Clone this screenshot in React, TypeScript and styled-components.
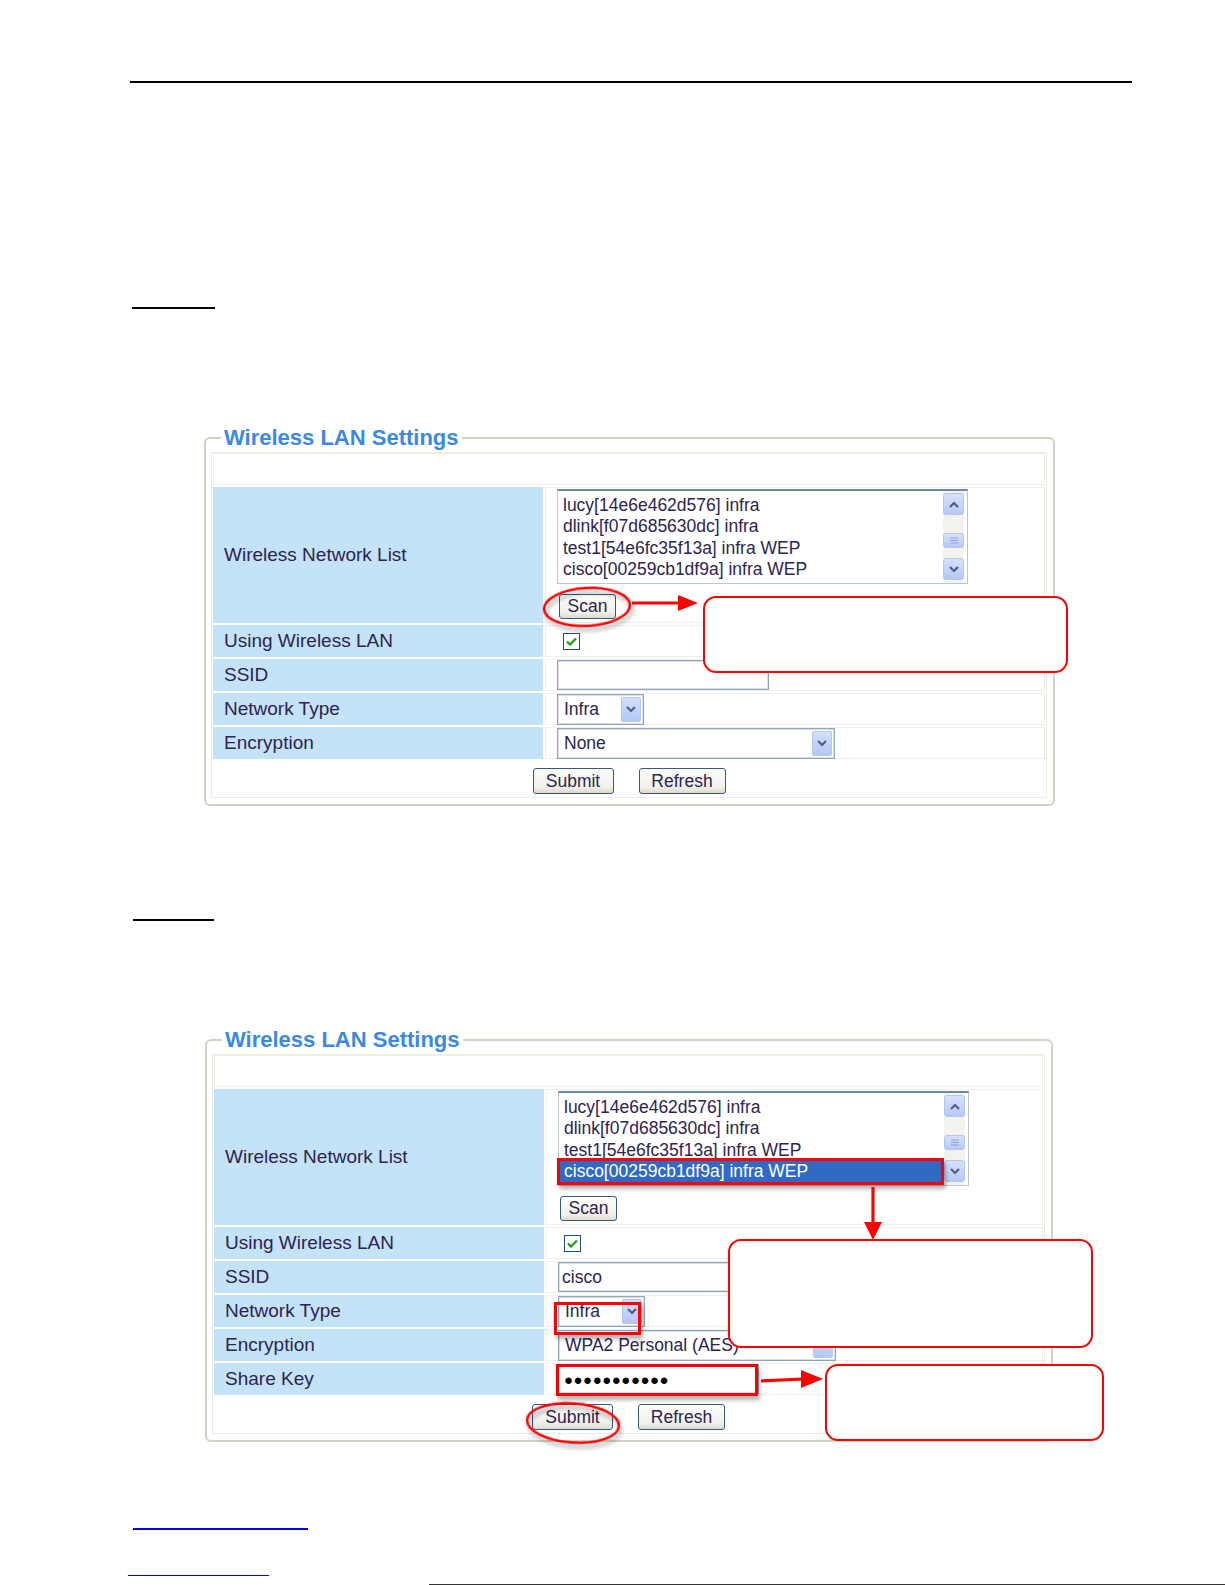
import React from 'react'
import styled, { createGlobalStyle } from 'styled-components'

const INK = '#2d2450'
const RED = '#ff0000'

const GlobalStyle = createGlobalStyle`
  html, body {
    margin: 0;
    padding: 0;
    background: #fff;
  }

  body {
    font-family: "Liberation Sans", Arial, sans-serif;
  }
`

/* page */

const Page = styled.div`
  position: relative;
  width: 1225px;
  height: 1585px;
  overflow: hidden;
  display: flex;
  flex-direction: column;
  align-items: flex-start;
`

const Rule = styled.div<{ $top: number; $left: number; $width: number; $thick?: number; $color?: string }>`
  flex-shrink: 0;
  margin-top: ${(p) => p.$top}px;
  margin-left: ${(p) => p.$left}px;
  width: ${(p) => p.$width}px;
  height: ${(p) => p.$thick ?? 2}px;
  background: ${(p) => p.$color ?? '#000'};
`

/* settings panel */

const Panel = styled.fieldset<{ $top: number; $left: number; $width: number }>`
  flex-shrink: 0;
  box-sizing: border-box;
  margin: ${(p) => p.$top}px 0 0 ${(p) => p.$left}px;
  width: ${(p) => p.$width}px;
  min-inline-size: 0;
  border: 2px solid #d3d3c4;
  border-radius: 6px;
  padding: 2px 6px 6px 5px;
`

const Legend = styled.legend`
  margin-left: 10px;
  padding: 0 3px;
  font: bold 22px/24px "Liberation Sans", Arial, sans-serif;
  color: #3a89e3;
`

const Sheet = styled.div`
  border: 1px solid #edece2;
  padding: 0 1px 1px;
  background: #fff;
  display: grid;
  grid-template-columns: 330px 1fr;
  gap: 2px;
`

const Spacer = styled.div`
  grid-column: 1 / -1;
  box-sizing: border-box;
  height: 32px;
  border: 1px solid #f1f0e8;
`

const Label = styled.div<{ $h: number }>`
  box-sizing: border-box;
  height: ${(p) => p.$h}px;
  padding-left: 11px;
  background: #c4e3f8;
  display: flex;
  align-items: center;
  font-size: 19px;
  color: ${INK};
`

const Value = styled.div<{ $h: number; $stack?: boolean }>`
  box-sizing: border-box;
  height: ${(p) => p.$h}px;
  border: 1px solid #f1f0e8;
  padding-left: 11px;
  display: flex;
  flex-direction: ${(p) => (p.$stack ? 'column' : 'row')};
  align-items: ${(p) => (p.$stack ? 'flex-start' : 'center')};
  padding-top: ${(p) => (p.$stack ? 1 : 0)}px;
`

const ButtonRow = styled.div`
  grid-column: 1 / -1;
  height: 35px;
  padding-top: 7px;
  box-sizing: border-box;
  display: flex;
  justify-content: center;
  align-items: flex-start;
  gap: 25px;
`

/* form controls */

const ListBox = styled.div`
  box-sizing: border-box;
  width: 411px;
  height: 95px;
  border: 1px solid #b9c5d3;
  border-top: 2px solid #6e89a5;
  display: flex;
`

const Items = styled.div`
  flex: 1;
  padding-top: 3.5px;
  overflow: hidden;
`

const Item = styled.div<{ $selected?: boolean }>`
  height: 21.5px;
  line-height: 21.5px;
  margin-left: 1px;
  padding-left: 4px;
  font-size: 17.5px;
  white-space: nowrap;
  color: ${(p) => (p.$selected ? '#fff' : INK)};
  background: ${(p) => (p.$selected ? '#316ac5' : 'transparent')};
`

const ScrollTrack = styled.div`
  width: 21px;
  margin: 0 3px 0 2px;
  background: #f3f2ec;
  display: flex;
  flex-direction: column;
`

const ScrollKnob = styled.div<{ $h: number; $gap: number }>`
  box-sizing: border-box;
  height: ${(p) => p.$h}px;
  margin-top: ${(p) => p.$gap}px;
  border: 1px solid #b4c6ee;
  border-radius: 3px;
  background: linear-gradient(#d6e2fd, #b6c9f6);
  display: flex;
  align-items: center;
  justify-content: center;
`

const Check = styled.span`
  box-sizing: border-box;
  width: 17px;
  height: 17px;
  margin-left: 6px;
  border: 1px solid #1c5180;
  background: #fff;
  display: flex;
  align-items: center;
  justify-content: center;
`

const TextBox = styled.div<{ $w: number }>`
  box-sizing: border-box;
  width: ${(p) => p.$w}px;
  height: 30px;
  padding-left: 3px;
  border: 1px solid #8ea4bf;
  box-shadow: inset 0 0 0 1px #d6dfeb;
  display: flex;
  align-items: center;
  font-size: 17.5px;
  color: ${INK};
`

const Dots = styled.span`
  font: 15px "Liberation Sans", "DejaVu Sans", sans-serif;
  letter-spacing: 0.5px;
  color: #000;
  padding-left: 2px;
`

const Select = styled.div<{ $w: number }>`
  box-sizing: border-box;
  width: ${(p) => p.$w}px;
  height: 31px;
  padding: 0 2px 0 6px;
  border: 1px solid #8ea4bf;
  box-shadow: inset 0 0 0 1px #d6dfeb;
  display: flex;
  align-items: center;
  justify-content: space-between;
  font-size: 17.5px;
  color: ${INK};
`

const DropButton = styled.span`
  box-sizing: border-box;
  width: 20px;
  height: 25px;
  border: 1px solid #b4c6ee;
  border-radius: 2px;
  background: linear-gradient(#d3dffd, #b3c7f5);
  display: flex;
  align-items: center;
  justify-content: center;
`

const Button = styled.button<{ $w: number; $h?: number; $gap?: number }>`
  box-sizing: border-box;
  width: ${(p) => p.$w}px;
  height: ${(p) => p.$h ?? 26}px;
  margin: ${(p) => p.$gap ?? 0}px 0 0 ${(p) => (p.$gap ? 2 : 0)}px;
  padding: 0;
  border: 1px solid #2f5b86;
  border-radius: 3px;
  background: linear-gradient(#fdfdfb, #f1f0ea 75%, #dedbcb);
  font: 17.5px "Liberation Sans", Arial, sans-serif;
  color: ${INK};
`

/* annotations laid over the screenshots */

const Callout = styled.div<{ $x: number; $y: number; $w: number; $h: number }>`
  position: absolute;
  left: ${(p) => p.$x}px;
  top: ${(p) => p.$y}px;
  width: ${(p) => p.$w}px;
  height: ${(p) => p.$h}px;
  box-sizing: border-box;
  border: 2.5px solid ${RED};
  border-radius: 13px;
  background: #fff;
`

const Mark = styled.div<{ $x: number; $y: number; $w: number; $h: number }>`
  position: absolute;
  left: ${(p) => p.$x}px;
  top: ${(p) => p.$y}px;
  width: ${(p) => p.$w}px;
  height: ${(p) => p.$h}px;
  box-sizing: border-box;
  border: 3px solid ${RED};
  box-shadow: 2px 4px 4px rgba(0, 0, 0, 0.3);
`

const Ink = styled.svg`
  position: absolute;
  left: 0;
  top: 0;
  pointer-events: none;
`

const Chevron = ({ up = false }: { up?: boolean }) => (
  <svg width="10" height="7" viewBox="0 0 10 7">
    <path d={up ? 'M1 6 L5 2 L9 6' : 'M1 1 L5 5 L9 1'} fill="none" stroke="#4d6185" strokeWidth="2.2" />
  </svg>
)

const Grip = () => (
  <svg width="10" height="7" viewBox="0 0 10 7">
    <path d="M1 1 H9 M1 3.5 H9 M1 6 H9" stroke="#8aa3e0" strokeWidth="1" />
  </svg>
)

const networks = [
  'lucy[14e6e462d576] infra',
  'dlink[f07d685630dc] infra',
  'test1[54e6fc35f13a] infra WEP',
  'cisco[00259cb1df9a] infra WEP',
]

type SettingsProps = {
  top: number
  left: number
  width: number
  picked?: boolean
}

const Settings = ({ top, left, width, picked = false }: SettingsProps) => (
  <Panel $top={top} $left={left} $width={width}>
    <Legend>Wireless LAN Settings</Legend>
    <Sheet>
      <Spacer />
      <Label $h={136}>Wireless Network List</Label>
      <Value $h={136} $stack>
        <ListBox>
          <Items>
            {networks.map((n, i) => (
              <Item key={n} $selected={picked && i === 3}>
                {n}
              </Item>
            ))}
          </Items>
          <ScrollTrack>
            <ScrollKnob $h={22} $gap={2}>
              <Chevron up />
            </ScrollKnob>
            <ScrollKnob $h={15} $gap={18}>
              <Grip />
            </ScrollKnob>
            <ScrollKnob $h={22} $gap={10}>
              <Chevron />
            </ScrollKnob>
          </ScrollTrack>
        </ListBox>
        <Button $w={57} $h={25} $gap={10}>
          Scan
        </Button>
      </Value>
      <Label $h={32}>Using Wireless LAN</Label>
      <Value $h={32}>
        <Check>
          <svg width="11" height="9" viewBox="0 0 11 9">
            <path d="M1 4.5 L4 7.5 L10 1.5" fill="none" stroke="#21a121" strokeWidth="2.4" />
          </svg>
        </Check>
      </Value>
      <Label $h={32}>SSID</Label>
      <Value $h={32}>
        <TextBox $w={212}>{picked ? 'cisco' : ''}</TextBox>
      </Value>
      <Label $h={32}>Network Type</Label>
      <Value $h={32}>
        <Select $w={87}>
          Infra
          <DropButton>
            <Chevron />
          </DropButton>
        </Select>
      </Value>
      <Label $h={32}>Encryption</Label>
      <Value $h={32}>
        <Select $w={278}>
          {picked ? 'WPA2 Personal (AES)' : 'None'}
          <DropButton>
            <Chevron />
          </DropButton>
        </Select>
      </Value>
      {picked && (
        <>
          <Label $h={32}>Share Key</Label>
          <Value $h={32}>
            <TextBox $w={201}>
              <Dots>●●●●●●●●●●●</Dots>
            </TextBox>
          </Value>
        </>
      )}
      <ButtonRow>
        <Button $w={81}>Submit</Button>
        <Button $w={87}>Refresh</Button>
      </ButtonRow>
    </Sheet>
  </Panel>
)

const App = () => (
  <Page>
    <GlobalStyle />
    <Rule $top={81} $left={130} $width={1002} />
    <Rule $top={224} $left={132} $width={83} />
    <Settings top={117} left={204} width={851} />
    <Rule $top={113} $left={133} $width={81} />
    <Settings top={107} left={205} width={848} picked />
    <Rule $top={86} $left={133} $width={175} $color="#0000ff" />
    <Rule $top={45} $left={128} $width={141} $thick={1} $color="#0000ff" />
    <Rule $top={8} $left={429} $width={796} $thick={1} $color="#333" />

    {/* first screenshot: scan */}
    <Callout $x={703} $y={596} $w={365} $h={77} />

    {/* second screenshot: pick a network */}
    <Mark $x={557} $y={1158} $w={387} $h={27} />
    <Mark $x={554} $y={1302} $w={87} $h={33} />
    <Mark $x={556} $y={1364} $w={202} $h={32} />
    <Callout $x={728} $y={1239} $w={365} $h={109} />
    <Callout $x={825} $y={1364} $w={279} $h={77} />

    <Ink width="1225" height="1585" viewBox="0 0 1225 1585">
      <defs>
        <filter id="shade" x="-20%" y="-20%" width="140%" height="160%">
          <feDropShadow dx="2" dy="4" stdDeviation="2" floodColor="#000" floodOpacity="0.35" />
        </filter>
      </defs>
      <ellipse cx="587" cy="607" rx="43" ry="19" fill="none" stroke={RED} strokeWidth="2.5" transform="rotate(-3 587 607)" filter="url(#shade)" />
      <path d="M632 603 H681" stroke={RED} strokeWidth="3.2" />
      <polygon points="678,595 698,603 678,611" fill={RED} />

      <path d="M873 1187 V1225" stroke={RED} strokeWidth="3.2" />
      <polygon points="864,1222 882,1222 873,1240" fill={RED} />

      <path d="M761 1381 L804 1379" stroke={RED} strokeWidth="3.2" />
      <polygon points="801,1370 823,1379 801,1388" fill={RED} />

      <ellipse cx="573" cy="1423" rx="46" ry="19.5" fill="none" stroke={RED} strokeWidth="2.5" transform="rotate(4 573 1423)" filter="url(#shade)" />
    </Ink>
  </Page>
)

export default App
